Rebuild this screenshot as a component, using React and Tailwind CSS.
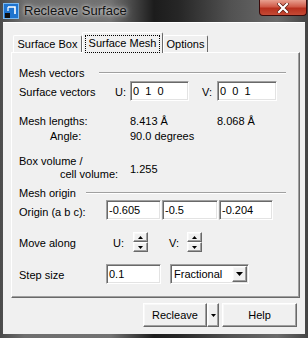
import React from 'react'

const font = { fontFamily: '"Liberation Sans", Arial, sans-serif' }

const sunken = 'border border-t-[#a0a0a0] border-l-[#a0a0a0] border-b-white border-r-white shadow-[inset_1px_1px_0_#696969,inset_-1px_-1px_0_#e3e3e3] bg-white'
const raised = 'border border-t-white border-l-white border-b-[#696969] border-r-[#696969] shadow-[inset_-1px_-1px_0_#a0a0a0,inset_1px_1px_0_#f8f8f8] bg-[#f0f0f0]'

function Field({ w, value, ml = '' }) {
  return (
    <div className={`${sunken} ${w} ${ml} h-[20px] flex items-center pl-[2px] leading-[13px] text-black whitespace-pre`}>
      {value}
    </div>
  )
}

function Header({ label, lineMl, lineW }) {
  return (
    <div className="flex items-center h-[12px] leading-[12px]">
      <span>{label}</span>
      <div className={`${lineMl} ${lineW} h-[2px] border-t border-t-[#a0a0a0] border-b border-b-white`} />
    </div>
  )
}

function Spinner() {
  return (
    <div className="flex flex-col w-[15px] h-[20px]">
      <div className={`${raised} flex-1 flex items-center justify-center`}>
        <svg width="5" height="3" viewBox="0 0 5 3"><path d="M2.5 0 L5 3 L0 3 Z" fill="#000" /></svg>
      </div>
      <div className={`${raised} flex-1 flex items-center justify-center`}>
        <svg width="5" height="3" viewBox="0 0 5 3"><path d="M0 0 L5 0 L2.5 3 Z" fill="#000" /></svg>
      </div>
    </div>
  )
}

function Tab({ label, active, w }) {
  if (active) {
    return (
      <div className={`${w} h-[21px] relative z-10 bg-[#f0f0f0] border-t border-l border-t-white border-l-white border-r border-r-[#696969] rounded-t-[2px] flex items-start justify-center pt-[2px]`}>
        <span className="border border-dotted border-black px-[3px] leading-[15px] h-[18px]">{label}</span>
      </div>
    )
  }
  return (
    <div className={`${w} h-[17px] mb-[1px] bg-[#f0f0f0] border-t border-l border-t-white border-l-white border-r border-r-[#696969] rounded-t-[2px] flex items-center justify-center leading-[13px] pt-[1px]`}>
      {label}
    </div>
  )
}

export default function App() {
  return (
    <div style={font} className="w-[308px] h-[338px] flex flex-col bg-[linear-gradient(90deg,#4a4a4a_0%,#6e6e6e_8%,#727272_36%,#1c1c1c_50%,#262626_58%,#525252_75%,#6a6a6a_90%,#444444_100%)] text-[11px] text-black">
      {/* title bar */}
      <div className="h-[22px] flex items-start">
        <svg className="mt-[3px] ml-[3px]" width="16" height="16" viewBox="0 0 16 16">
          <rect x="0.5" y="0.5" width="15" height="15" fill="#1f74cf" stroke="#7ab8f0" />
          <path d="M5 4 H12 V11" stroke="#fff" strokeWidth="1.6" fill="none" />
          <path d="M5 4 V8" stroke="#fff" strokeWidth="1.2" fill="none" />
          <rect x="2" y="10" width="5" height="5" fill="#111" />
        </svg>
        <span className="ml-[5px] mt-[3px] text-[13px] leading-[16px] text-[#111] [text-shadow:0_0_6px_#cfcfcf,0_0_3px_#dcdcdc]">Recleave Surface</span>
        <div className="ml-auto mr-[1px] w-[48px] h-[16px] rounded-b-[4px] border border-t-0 border-[#3a0a0a] bg-[linear-gradient(180deg,#e8a090_0%,#d05a48_45%,#b8301e_55%,#c54a35_100%)] flex items-center justify-center">
          <svg width="12" height="10" viewBox="0 0 12 10">
            <path d="M2 1 L10 9 M10 1 L2 9" stroke="#5a1a10" strokeWidth="3.6" strokeLinecap="square" />
            <path d="M2 1 L10 9 M10 1 L2 9" stroke="#fff" strokeWidth="2.2" strokeLinecap="square" />
          </svg>
        </div>
      </div>

      {/* client area */}
      <div className="mx-[3px] mb-[4px] flex-1 bg-[#f0f0f0] border-t border-t-white flex flex-col">
        {/* tabs */}
        <div className="mt-[9px] ml-[10px] flex items-end h-[21px] -mb-[1px]">
          <Tab label="Surface Box" w="w-[69px]" />
          <Tab label="Surface Mesh" w="w-[81px]" active />
          <Tab label="Options" w="w-[45px]" />
        </div>

        {/* panel */}
        <div className="ml-[8px] w-[289px] h-[246px] border border-t-white border-l-white border-b-[#696969] border-r-[#696969] shadow-[inset_-1px_-1px_0_#a0a0a0] flex flex-col pl-[7px]">
          <div className="mt-[14px]">
            <Header label="Mesh vectors" lineMl="ml-[15px]" lineW="w-[187px]" />
          </div>

          <div className="mt-[2px] flex items-start h-[20px]">
            <span className="w-[96px] pt-[5px] leading-[13px]">Surface vectors</span>
            <span className="w-[15px] pt-[5px] leading-[13px]">U:</span>
            <Field w="w-[59px]" value="0  1  0" />
            <span className="ml-[13px] w-[15px] pt-[5px] leading-[13px]">V:</span>
            <Field w="w-[60px]" value="0  0  1" />
          </div>

          <div className="mt-[14px] flex leading-[13px]">
            <span className="w-[111px]">Mesh lengths:</span>
            <span className="w-[87px]">8.413 Å</span>
            <span>8.068 Å</span>
          </div>
          <div className="mt-[2px] flex leading-[13px]">
            <span className="w-[111px] pl-[31px]">Angle:</span>
            <span>90.0 degrees</span>
          </div>

          <div className="mt-[12px] flex leading-[13px]">
            <div className="w-[111px] flex flex-col">
              <span>Box volume /</span>
              <span className="pl-[41px]">cell volume:</span>
            </div>
            <span className="mt-[8px]">1.255</span>
          </div>

          <div className="mt-[6px]">
            <Header label="Mesh origin" lineMl="ml-[10px]" lineW="w-[200px]" />
          </div>

          <div className="mt-[1px] flex items-start h-[20px]">
            <span className="w-[87px] pt-[6px] leading-[13px]">Origin (a b c):</span>
            <Field w="w-[55px]" value="-0.605" />
            <Field w="w-[56px]" ml="ml-[1px]" value="-0.5" />
            <Field w="w-[54px]" ml="ml-[1px]" value="-0.204" />
          </div>

          <div className="mt-[12px] flex items-start h-[20px]">
            <span className="w-[94px] pt-[5px] leading-[13px]">Move along</span>
            <span className="w-[20px] pt-[5px] leading-[13px]">U:</span>
            <Spinner />
            <span className="ml-[21px] w-[18px] pt-[5px] leading-[13px]">V:</span>
            <Spinner />
          </div>

          <div className="mt-[12px] flex items-start h-[20px]">
            <span className="w-[87px] pt-[5px] leading-[13px]">Step size</span>
            <Field w="w-[55px]" value="0.1" />
            <div className={`${sunken} ml-[9px] w-[79px] h-[20px] flex items-center pl-[3px] pr-[1px] leading-[13px]`}>
              <span className="flex-1">Fractional</span>
              <div className={`${raised} w-[15px] h-[16px] flex items-center justify-center`}>
                <svg width="7" height="4" viewBox="0 0 7 4"><path d="M0 0 L7 0 L3.5 4 Z" fill="#000" /></svg>
              </div>
            </div>
          </div>
        </div>

        {/* buttons */}
        <div className="mt-[5px] flex h-[24px] ml-[140px]">
          <div className={`${raised} w-[64px] flex items-center justify-center leading-[13px]`}>Recleave</div>
          <div className={`${raised} w-[12px] flex items-center justify-center`}>
            <svg width="5" height="3" viewBox="0 0 5 3"><path d="M0 0 L5 0 L2.5 3 Z" fill="#000" /></svg>
          </div>
          <div className={`${raised} ml-[3px] w-[75px] flex items-center justify-center leading-[13px]`}>Help</div>
        </div>
      </div>
    </div>
  )
}
